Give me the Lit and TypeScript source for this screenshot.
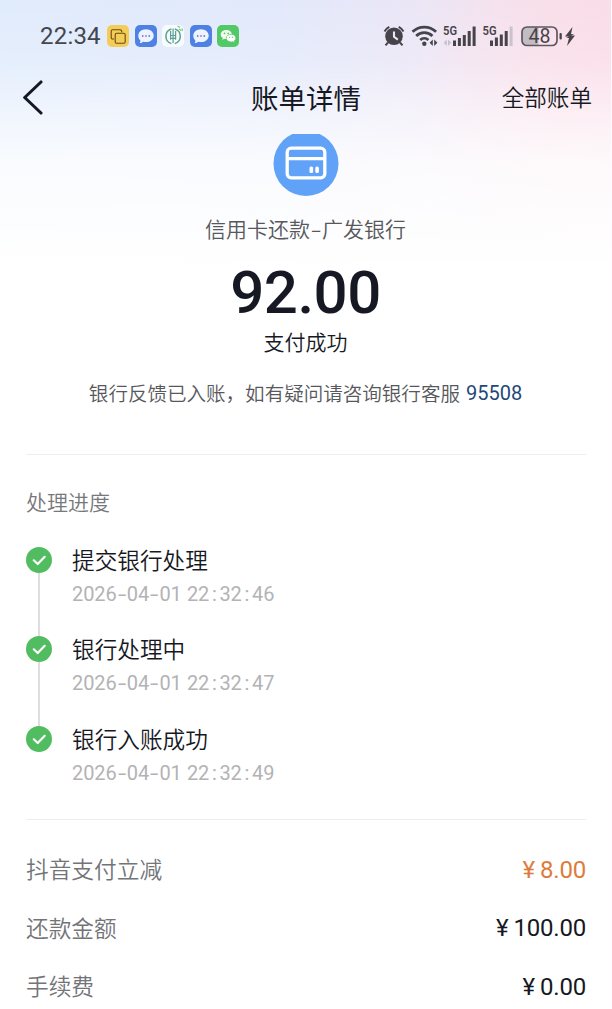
import { LitElement, html, css, svg } from "lit";
import { customElement } from "lit/decorators.js";

const chat = () => html`<svg class="app" viewBox="0 0 22 22">
  <rect width="22" height="22" rx="5" fill="#4f80e3" />
  <path d="M11 4.300c4.400 0 7.700 2.800 7.700 6.400s-3.300 6.400-7.700 6.400c-1 0-2-.1-2.900-.4-.9.9-2.200 1.400-3.400 1.200.6-.7.8-1.600.6-2.600C4 14.100 3.300 12.500 3.300 10.700c0-3.600 3.300-6.400 7.700-6.400z" fill="#edf3ff" />
  <circle cx="7.700" cy="11" r=".9" fill="#5b83d8" /><circle cx="11" cy="11" r=".9" fill="#b072cf" /><circle cx="14.300" cy="11" r=".9" fill="#5b83d8" />
</svg>`;

@customElement("status-bar")
export class StatusBar extends LitElement {
  static styles = css`
    :host { display: flex; align-items: center; height: 24px; padding: 24px 35px 0 40px; color: #43464f; }
    .time { font: 450 24px/24px Roboto, sans-serif; width: 67px; white-space: nowrap; letter-spacing: .2px; }
    .apps { display: flex; gap: 5.500px; flex: 1; }
    .app { width: 22px; height: 22px; display: block; }
    .sys { display: block; width: 194px; height: 24px; }
    .net { font: 600 12.500px Roboto, sans-serif; }
    .pct { font: 400 19.500px Roboto, sans-serif; }
  `;
  render() {
    const bars = (x: number, y: number, hs: number[], last: string) =>
      hs.map((h, i) => svg`<rect x=${x + i * 4.9} y=${y - h} width="3" height=${h} fill=${i === hs.length - 1 ? last : "#46434b"} />`);
    return html`
      <span class="time">22:34</span>
      <div class="apps">
        <svg class="app" viewBox="0 0 22 22">
          <rect width="22" height="22" rx="5" fill="#f3cd58" />
          <g fill="none" stroke="#6a4a16" stroke-width="1.100">
            <path d="M7 14H5.700a1.500 1.500 0 0 1-1.500-1.500V6.300a1.500 1.500 0 0 1 1.500-1.500h7.500a1.500 1.500 0 0 1 1.500 1.500v1" />
            <rect x="8.200" y="8.200" width="10" height="10" rx="1.500" />
          </g>
        </svg>
        ${chat()}
        <svg class="app" viewBox="0 0 22 22">
          <rect width="22" height="22" rx="5" fill="#f6fbfc" />
          <g fill="none" stroke="#5d9f92" stroke-width="1.500">
            <path d="M9.400 4A7.600 7.600 0 0 0 9.400 18.600M12.800 4A7.600 7.600 0 0 1 12.800 18.600" />
            <path d="M11.100 3.500V18M8.600 6v4.500h5V6M8.600 13.300h5M8.600 10.500v4.300M13.600 10.500v4.300" stroke-width="1.200" />
          </g>
          <path d="M15.500 1l2.500 1.500M20 3.500l.5 2.500M17 4l2 1.500" stroke="#7fcb82" stroke-width="1.300" fill="none" />
        </svg>
        ${chat()}
        <svg class="app" viewBox="0 0 22 22">
          <rect width="22" height="22" rx="5" fill="#52c966" />
          <path d="M9.300 5c3.200 0 5.600 2 5.600 4.600s-2.400 4.500-5.600 4.500c-.7 0-1.400-.1-2-.3L5.300 14.900l.5-1.800C4.500 12.300 3.700 11 3.700 9.600 3.700 7 6.100 5 9.300 5z" fill="#f0fbee" />
          <path d="M14 9.300c2.800 0 4.800 1.700 4.800 3.800 0 1.200-.6 2.200-1.600 2.900l.4 1.500-1.700-.8c-.6.2-1.200.3-1.900.3-2.700 0-4.700-1.700-4.700-3.900s2-3.800 4.700-3.800z" fill="#fff" stroke="#52c966" stroke-width=".7" />
          <g fill="#52c966"><circle cx="7.500" cy="8.400" r=".8" /><circle cx="11.200" cy="8.400" r=".8" /><circle cx="12.600" cy="12.300" r=".65" /><circle cx="15.500" cy="12.300" r=".65" /></g>
        </svg>
      </div>
      <svg class="sys" viewBox="0 0 194 24">
        <g fill="#46434b">
          <circle cx="12" cy="12.300" r="8.800" />
          <path d="M2.500 7.500a12 12 0 0 1 4.800-4.600M21.500 7.500a12 12 0 0 0-4.800-4.600M6 18.500l-2.500 2.800M18 18.500l2.500 2.800" stroke="#46434b" stroke-width="2" fill="none" />
          <path d="M12 7.500v5.300l3.800 2.800" stroke="#e9e9f4" stroke-width="2.100" fill="none" />
          <g fill="none" stroke="#46434b" stroke-width="2.700">
            <path d="M30.500 7.800a17 17 0 0 1 23.600 0" /><path d="M34.200 12a11.500 11.500 0 0 1 16.200 0" /><path d="M38.200 16a6 6 0 0 1 8.200 0" />
          </g>
          <circle cx="42.300" cy="19.800" r="2.200" />
          <path d="M50.800 15.500v6.500l-3.200-3.200zM52.200 15.500v6.500l3.200-3.200z" />
          <text class="net" x="61" y="11" textLength="14" lengthAdjust="spacingAndGlyphs">5G</text>
          <text class="net" x="100.500" y="11" textLength="14" lengthAdjust="spacingAndGlyphs">5G</text>
          <path d="M64.800 15.500v6.500l-3.200-3.200zM66 15.500v6.500l3.200-3.200z" fill="#c4c2cf" />
        </g>
        ${bars(71, 22, [5.5, 8, 11, 15, 19.5], "#46434b")}
        ${bars(108, 22, [5.5, 8.5, 11.5, 15, 19.5], "#c9c3cc")}
        <path d="M145 3h11.500v18H145a5 5 0 0 1-5-5V8a5 5 0 0 1 5-5z" fill="#c2bcc5" />
        <rect x="140" y="3" width="35" height="18.500" rx="5" fill="none" stroke="#5b575f" stroke-width="1.700" />
        <rect x="177.500" y="9" width="2.300" height="6.500" rx="1" fill="#46434b" />
        <text class="pct" x="146.500" y="19" fill="#46434b" textLength="22">48</text>
        <path d="M190.500 3l-7.500 9.500h4l-3 1.500h3l-2 8 8-10.500h-4l3-1.500h-3z" fill="#46434b" />
      </svg>`;
  }
}

@customElement("app-root")
export class AppRoot extends LitElement {
  static styles = css`
    :host {
      display: block; box-sizing: border-box; width: 612px; height: 1009px; overflow: hidden;
      border-right: 1px solid #fdfbfd;
      font-family: "Noto Sans CJK SC", sans-serif; font-weight: 350; color: #161823;
      background:
        linear-gradient(180deg, rgba(255,255,255,0) 0, rgba(255,255,255,.15) 60px, rgba(255,255,255,.5) 110px, rgba(255,255,255,.8) 160px, #fff 270px),
        radial-gradient(ellipse 200px 200px at 100% 80px, rgba(251,214,230,.65) 0, rgba(251,225,236,0) 100%),
        linear-gradient(90deg, #e0ebfc 0, #e2e9fb 45%, #ebe6f6 68%, #f7e4ec 90%, #f8e3eb 100%);
    }
    .num { font-family: Roboto, sans-serif; }
    .nav { display: grid; grid-template-columns: 140px 1fr 140px; align-items: center; height: 50px; margin-top: 24px; padding: 0 19px 0 20px; line-height: 40px; }
    .back { display: block; width: 24px; height: 36px; }
    .title { font-size: 27.500px; font-weight: 400; text-align: center; }
    .all { font-size: 22.600px; text-align: right; white-space: nowrap; }
    .hero { display: flex; flex-direction: column; align-items: center; padding-top: 12px; }
    .logo { display: block; width: 66px; height: 62px; }
    .payee { font-size: 21px; line-height: 30px; margin-top: 17px; color: #57585c; white-space: nowrap; }
    .dash { display: inline-block; width: 12px; text-align: center; transform: scaleX(1.550); }
    .amount { font-family: Roboto, sans-serif; font-size: 60px; font-weight: 550; line-height: 60px; margin-top: 20px; letter-spacing: -.5px; }
    .state { font-size: 21px; line-height: 30px; margin-top: 3px; }
    .note { display: flex; gap: 6px; font-size: 19.550px; line-height: 30px; margin-top: 22px; color: #57585c; white-space: nowrap; }
    .tel { color: #1f4978; font-size: 20px; font-weight: 400; }
    .sheet { padding: 0 25px 0 26px; margin-top: 46px; }
    .progress { border-top: 1px solid #eee; border-bottom: 1px solid #eee; height: 364px; }
    .heading { font-size: 21px; line-height: 30px; margin-top: 31px; color: #77787b; }
    .step { display: flex; gap: 20px; height: 89.700px; }
    .steps { margin-top: 30.500px; }
    .rail { display: flex; flex-direction: column; align-items: center; width: 26px; }
    .check { display: block; width: 26px; height: 26px; flex: none; }
    .line { width: 1.500px; flex: 1; background: #dedede; }
    .name { font-size: 22.670px; line-height: 26px; }
    .when { display: flex; font-family: Roboto, sans-serif; font-size: 20px; line-height: 24px; margin-top: 9px; color: #b3b3b5; font-weight: 400; letter-spacing: -.1px; }
    .mark { width: 10.300px; text-align: center; }
    .hy { transform: scaleX(1.500); }
    .sp { width: 5.200px; }
    .rows { padding-top: 19.500px; }
    .row { display: flex; justify-content: space-between; align-items: center; height: 58.600px; font-size: 22.700px; }
    .label { color: #737478; }
    .value { display: flex; gap: 5px; font-family: Roboto, sans-serif; font-size: 24px; font-weight: 400; letter-spacing: -.2px; padding-top: 2px; }
    .off { color: #dd7b3d; }
  `;
  steps = [
    ["提交银行处理", "2026-04-01 22:32:46"],
    ["银行处理中", "2026-04-01 22:32:47"],
    ["银行入账成功", "2026-04-01 22:32:49"],
  ];
  rows = [
    ["抖音支付立减", "8.00", "off"],
    ["还款金额", "100.00", ""],
    ["手续费", "0.00", ""],
  ];
  stamp(text: string) {
    return text.split(/([-: ])/).map((part) =>
      part === "-" ? html`<span class="mark hy">-</span>`
      : part === ":" ? html`<span class="mark">:</span>`
      : part === " " ? html`<span class="sp"> </span>`
      : html`<span>${part}</span>`);
  }
  render() {
    return html`
      <status-bar></status-bar>
      <div class="nav">
        <svg class="back" viewBox="0 0 24 36"><path d="M21 3L4.700 18.500 21 34" fill="none" stroke="#161823" stroke-width="3.100" stroke-linecap="round" stroke-linejoin="round" /></svg>
        <div class="title">账单详情</div>
        <div class="all">全部账单</div>
      </div>
      <div class="hero">
        <svg class="logo" viewBox="0 0 66 62">
          <circle cx="33" cy="29.500" r="32.500" fill="#60a2f7" />
          <g fill="none" stroke="#fff" stroke-width="3.300"><rect x="14.200" y="14.200" width="37.600" height="29.600" rx="4" /><path d="M14 24.700h38" /></g>
          <rect x="36.500" y="32.500" width="3.600" height="6.500" rx="1.500" fill="#fff" /><rect x="42.300" y="32.500" width="3.600" height="6.500" rx="1.500" fill="#fff" />
        </svg>
        <div class="payee">信用卡还款<span class="dash">-</span>广发银行</div>
        <div class="amount">92.00</div>
        <div class="state">支付成功</div>
        <div class="note"><span>银行反馈已入账，如有疑问请咨询银行客服</span><span class="tel num">95508</span></div>
      </div>
      <div class="sheet">
        <div class="progress">
          <div class="heading">处理进度</div>
          <div class="steps">
            ${this.steps.map(([name, when], i) => html`
              <div class="step">
                <div class="rail">
                  <svg class="check" viewBox="0 0 26 26"><circle cx="13" cy="13" r="13" fill="#52bd60" /><path d="M7.800 13.300l3.900 3.700 7-7.200" fill="none" stroke="#fff" stroke-width="2.200" stroke-linecap="round" stroke-linejoin="round" /></svg>
                  ${i < 2 ? html`<div class="line"></div>` : ""}
                </div>
                <div><div class="name">${name}</div><div class="when">${this.stamp(when)}</div></div>
              </div>`)}
          </div>
        </div>
        <div class="rows">
          ${this.rows.map(([label, value, tone]) => html`
            <div class="row"><span class="label">${label}</span><span class="value ${tone}"><span>¥</span><span>${value}</span></span></div>`)}
        </div>
      </div>`;
  }
}
